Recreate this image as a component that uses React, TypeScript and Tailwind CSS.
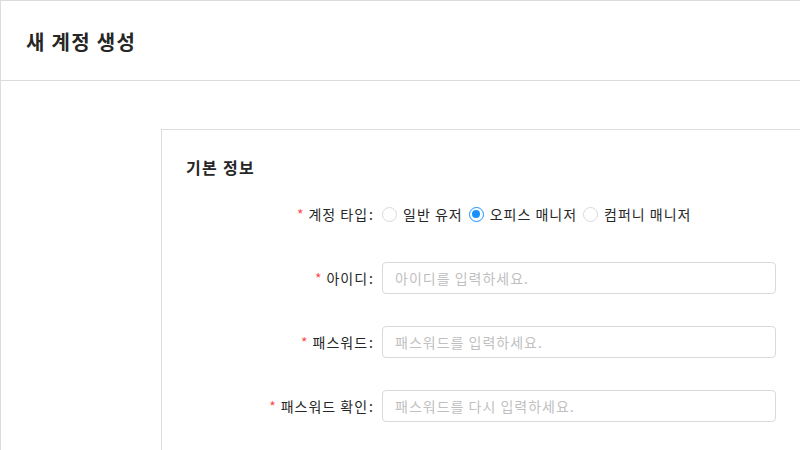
import { useState } from "react";

const FONT = "font-['Noto_Sans_CJK_KR','Noto_Sans',sans-serif]";

type Field = { label: string; placeholder: string };

const fields: Field[] = [
  { label: "아이디", placeholder: "아이디를 입력하세요." },
  { label: "패스워드", placeholder: "패스워드를 입력하세요." },
  { label: "패스워드 확인", placeholder: "패스워드를 다시 입력하세요." },
];

const accountTypes = ["일반 유저", "오피스 매니저", "컴퍼니 매니저"];

function Label({ text }: { text: string }) {
  return (
    <div className="flex w-[212px] shrink-0 items-center justify-end text-[14px] tracking-[1px] text-[#262626]">
      <span className="mr-1 text-[14px] text-[#ff4d4f]">*</span>
      {text}
      <span className="ml-[1px]">:</span>
    </div>
  );
}

function Radio({ label, checked, onClick }: { label: string; checked: boolean; onClick: () => void }) {
  return (
    <label className="flex cursor-pointer items-center" onClick={onClick}>
      <span
        className={`flex h-[15px] w-[15px] items-center justify-center rounded-full border bg-white ${
          checked ? "border-[#1890ff]" : "border-[#d9d9d9]"
        }`}
      >
        {checked && <span className="h-[8px] w-[8px] rounded-full bg-[#1890ff]" />}
      </span>
      <span className="pl-[6px] pr-[6px] text-[14px] tracking-[1px] text-[#262626]">{label}</span>
    </label>
  );
}

export default function App() {
  const [type, setType] = useState(1);

  return (
    <div className={`h-[450px] w-[800px] overflow-hidden bg-white ${FONT}`}>
      <div className="w-[820px] border-l border-t border-[#dcdcdc]">
        {/* Page header */}
        <div className="flex h-[80px] items-center border-b border-[#dcdcdc] pl-[25px] pt-[2px]">
          <h1 className="text-[20px] font-bold tracking-[1.3px] text-[#262626]">새 계정 생성</h1>
        </div>

        {/* Form card */}
        <div className="pl-[160px] pt-[48px]">
          <div className="h-[400px] border-l border-t border-[#dcdcdc] pt-[25px]">
            <h2 className="pl-[24px] text-[16px] font-bold leading-6 tracking-[1.3px] text-[#262626]">기본 정보</h2>

            <div className="mt-[19px] flex flex-col gap-8">
              <div className="flex h-8 items-center">
                <Label text="계정 타입" />
                <div className="ml-2 flex items-center">
                  {accountTypes.map((t, i) => (
                    <Radio key={t} label={t} checked={type === i} onClick={() => setType(i)} />
                  ))}
                </div>
              </div>

              {fields.map((f) => (
                <div key={f.label} className="flex h-8 items-center">
                  <Label text={f.label} />
                  <input
                    type={f.label.startsWith("패스") ? "password" : "text"}
                    placeholder={f.placeholder}
                    className="ml-2 h-8 w-[394px] rounded-[4px] border border-[#d9d9d9] px-3 text-[14px] tracking-[1px] text-[#262626] outline-none placeholder:text-[#bfbfbf]"
                  />
                </div>
              ))}
            </div>
          </div>
        </div>
      </div>
    </div>
  );
}
